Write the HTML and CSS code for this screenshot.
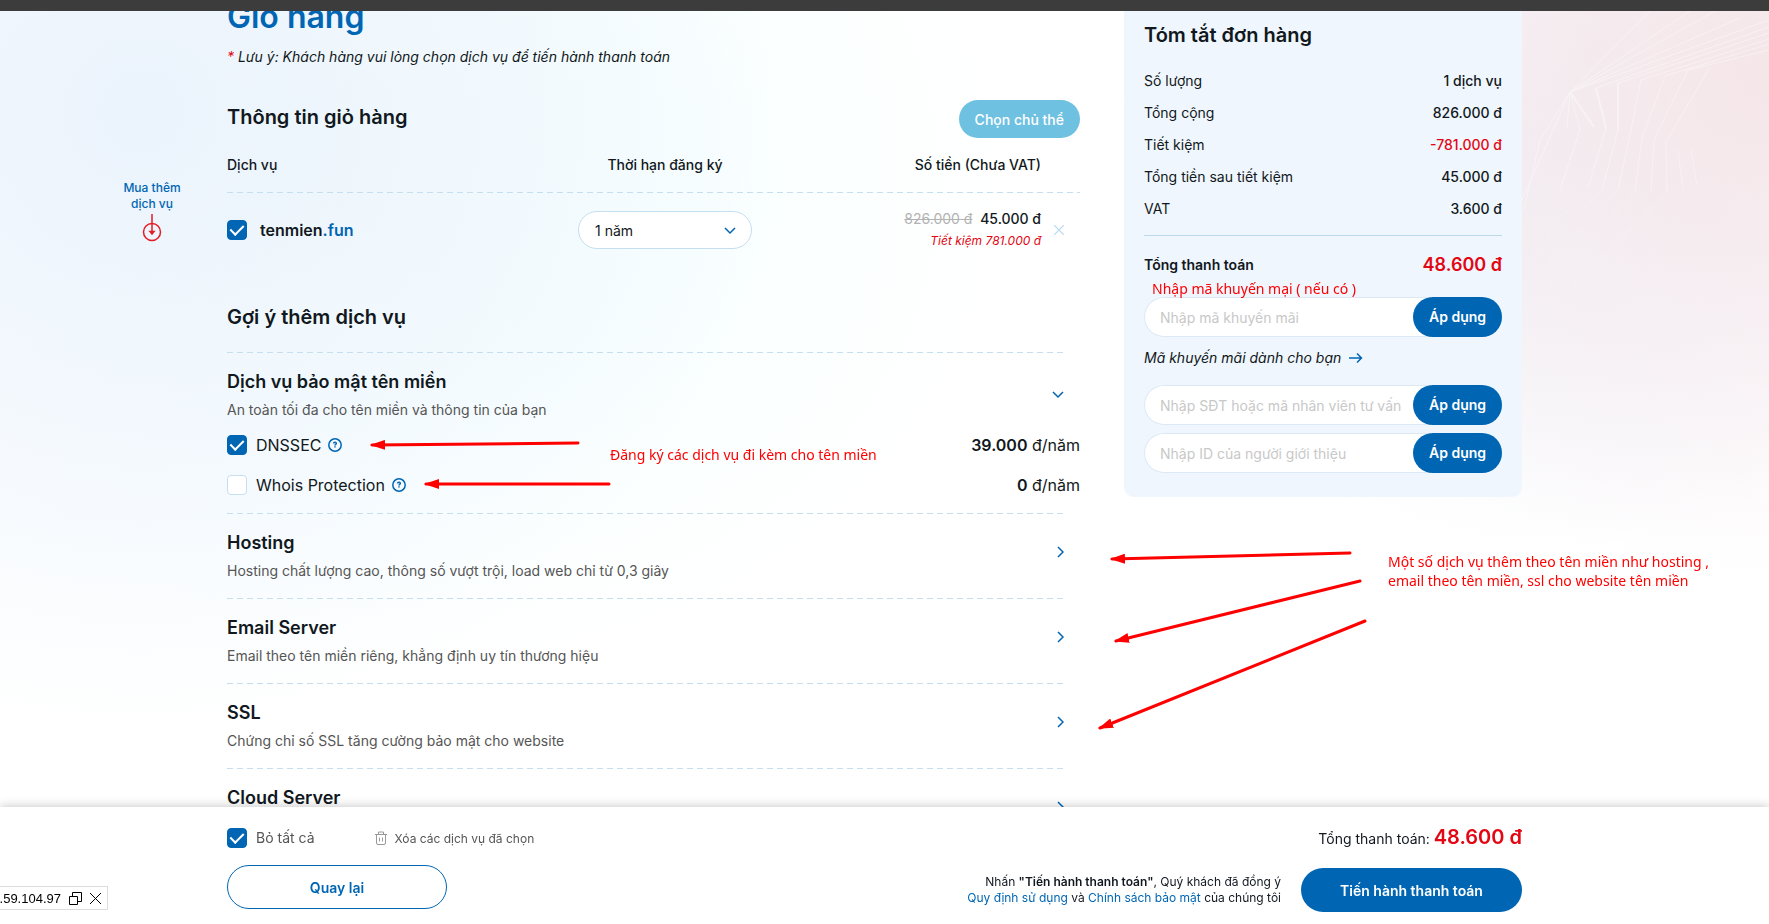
FILE: index.html
```html
<!DOCTYPE html>
<html lang="vi">
<head>
    <meta charset="UTF-8">
    <meta name="viewport" content="width=device-width, initial-scale=1.0">
    <title>Giỏ hàng</title>
    <link rel="stylesheet" href="styles.css">
</head>
<body>
    <div class="topbar"></div>

    <svg class="bg-lines" width="269" height="300" viewBox="0 0 269 300" fill="none" stroke="#fff">
        <path d="M70 92 190 11M70 92 215 11M70 92 240 18M70 92 269 20M96 88 269 27M118 83 269 33M141 80 269 39M165 76 269 44M188 70 269 50M70 92 150 11"/>
        <path stroke-width="2" d="M70 92 94 127M96 88 106 128M118 83 118 130"/>
        <path d="M70 92 67 128M70 92 80 130 60 190M70 92 22 200M70 92 40 140 24 210M141 80 130 135 118 190M165 76 142 138 135 192M188 70 154 140 151 192M210 67 166 142 167 192M106 128 88 188M118 130 102 190M178 150 183 190M191 150 197 185"/>
        <path opacity=".5" d="M102 190 24 265M118 190 30 285M135 192 48 289M167 192 70 289M80 200 22 250"/>
    </svg>

    <a class="buy-more" href="#">
        Mua thêm<br>dịch vụ
        <svg width="20" height="28" viewBox="0 0 20 28" fill="none" stroke="#e31b23" stroke-width="1.5">
            <circle cx="10" cy="18" r="8.500"/>
            <path d="M10 0v19"/>
            <path d="M8 17.500h4L10 20z"/>
        </svg>
    </a>

    <main class="container">
        <section class="cart">
            <h1>Giỏ hàng</h1>
            <p class="note"><span class="red">*</span> Lưu ý: Khách hàng vui lòng chọn dịch vụ để tiến hành thanh toán</p>

            <div class="cart-head">
                <h2>Thông tin giỏ hàng</h2>
                <button type="button" class="btn-owner">Chọn chủ thể</button>
            </div>

            <table class="cart-table">
                <thead>
                    <tr>
                        <th class="col-name">Dịch vụ</th>
                        <th class="col-term">Thời hạn đăng ký</th>
                        <th class="col-price">Số tiền (Chưa VAT)</th>
                        <th class="col-remove"></th>
                    </tr>
                </thead>
                <tbody>
                    <tr>
                        <td>
                            <label class="domain"><input type="checkbox" class="check" checked><span>tenmien<span class="blue">.fun</span></span></label>
                        </td>
                        <td>
                            <div class="term">
                                <select aria-label="Thời hạn đăng ký"><option>1 năm</option><option>2 năm</option></select>
                                <svg width="12" height="8" viewBox="0 0 12 8" fill="none" stroke="#0066b3" stroke-width="1.500"><path d="M1 1l5 5 5-5"/></svg>
                            </div>
                        </td>
                        <td class="price">
                            <p><del>826.000 đ</del> <span>45.000 đ</span></p>
                            <p class="saving">Tiết kiệm 781.000 đ</p>
                        </td>
                        <td>
                            <button type="button" class="btn-remove" aria-label="Xóa">
                                <svg width="10" height="10" viewBox="0 0 10 10" stroke="#b8d8ee" stroke-width="1.2"><path d="M0 0l10 10M10 0L0 10"/></svg>
                            </button>
                        </td>
                    </tr>
                </tbody>
            </table>

            <h2 class="suggest">Gợi ý thêm dịch vụ</h2>

            <div class="services">
                <div class="service">
                    <button type="button" class="service-head">
                        <span><strong>Dịch vụ bảo mật tên miền</strong><small>An toàn tối đa cho tên miền và thông tin của bạn</small></span>
                        <svg width="12" height="8" viewBox="0 0 12 8" fill="none" stroke="#0066b3" stroke-width="1.500"><path d="M1 1l5 5 5-5"/></svg>
                    </button>
                    <div class="options">
                        <div class="option">
                            <label><input type="checkbox" class="check" checked>DNSSEC</label>
                            <svg width="14" height="14" viewBox="0 0 14 14" fill="none" stroke="#0066b3" stroke-width="1.5"><circle cx="7" cy="7" r="6.200"/><path d="M5.500 5.500C5.700 3.600 8.500 3.800 8.300 5.500 8.200 6.400 7 6.300 7 7.600M7 8.200v1.200"/></svg>
                            <span class="cost"><b>39.000</b> đ/năm</span>
                        </div>
                        <div class="option">
                            <label><input type="checkbox" class="check">Whois Protection</label>
                            <svg width="14" height="14" viewBox="0 0 14 14" fill="none" stroke="#0066b3" stroke-width="1.5"><circle cx="7" cy="7" r="6.200"/><path d="M5.500 5.500C5.700 3.600 8.500 3.800 8.300 5.500 8.200 6.400 7 6.300 7 7.600M7 8.200v1.200"/></svg>
                            <span class="cost"><b>0</b> đ/năm</span>
                        </div>
                    </div>
                </div>
                <div class="service closed">
                    <button type="button" class="service-head">
                        <span><strong>Hosting</strong><small>Hosting chất lượng cao, thông số vượt trội, load web chỉ từ 0,3 giây</small></span>
                        <svg width="8" height="12" viewBox="0 0 8 12" fill="none" stroke="#0066b3" stroke-width="1.500"><path d="M2 1l5 5-5 5"/></svg>
                    </button>
                </div>
                <div class="service closed">
                    <button type="button" class="service-head">
                        <span><strong>Email Server</strong><small>Email theo tên miền riêng, khẳng định uy tín thương hiệu</small></span>
                        <svg width="8" height="12" viewBox="0 0 8 12" fill="none" stroke="#0066b3" stroke-width="1.500"><path d="M2 1l5 5-5 5"/></svg>
                    </button>
                </div>
                <div class="service closed">
                    <button type="button" class="service-head">
                        <span><strong>SSL</strong><small>Chứng chỉ số SSL tăng cường bảo mật cho website</small></span>
                        <svg width="8" height="12" viewBox="0 0 8 12" fill="none" stroke="#0066b3" stroke-width="1.500"><path d="M2 1l5 5-5 5"/></svg>
                    </button>
                </div>
                <div class="service closed">
                    <button type="button" class="service-head">
                        <span><strong>Cloud Server</strong></span>
                        <svg width="8" height="12" viewBox="0 0 8 12" fill="none" stroke="#0066b3" stroke-width="1.500"><path d="M2 1l5 5-5 5"/></svg>
                    </button>
                </div>
            </div>
        </section>

        <aside class="summary">
            <h2>Tóm tắt đơn hàng</h2>
            <dl>
                <div><dt>Số lượng</dt><dd>1 dịch vụ</dd></div>
                <div><dt>Tổng cộng</dt><dd>826.000 đ</dd></div>
                <div><dt>Tiết kiệm</dt><dd class="red">-781.000 đ</dd></div>
                <div><dt>Tổng tiền sau tiết kiệm</dt><dd>45.000 đ</dd></div>
                <div><dt>VAT</dt><dd>3.600 đ</dd></div>
            </dl>
            <p class="total"><span>Tổng thanh toán</span><strong>48.600 đ</strong></p>
            <form class="code">
                <input type="text" placeholder="Nhập mã khuyến mãi" aria-label="Nhập mã khuyến mãi">
                <button type="button">Áp dụng</button>
            </form>
            <a class="promo" href="#">Mã khuyến mãi dành cho bạn
                <svg width="14" height="12" viewBox="0 0 14 12" fill="none" stroke="#0066b3" stroke-width="1.500"><path d="M0 6h12M8 1.500L12.500 6 8 10.500"/></svg>
            </a>
            <form class="code">
                <input type="text" placeholder="Nhập SĐT hoặc mã nhân viên tư vấn" aria-label="Nhập SĐT hoặc mã nhân viên tư vấn">
                <button type="button">Áp dụng</button>
            </form>
            <form class="code">
                <input type="text" placeholder="Nhập ID của người giới thiệu" aria-label="Nhập ID của người giới thiệu">
                <button type="button">Áp dụng</button>
            </form>
        </aside>
    </main>

    <footer class="checkout">
        <div class="checkout-inner">
            <div class="checkout-left">
                <div class="select-row">
                    <label><input type="checkbox" class="check" checked>Bỏ tất cả</label>
                    <button type="button" class="btn-clear">
                        <svg width="12" height="14" viewBox="0 0 12 14" fill="none" stroke="#999"><path d="M0 3.500h12M3.500 3V1h5v2M1.500 4v8q0 1.500 1.500 1.500h6q1.500 0 1.500-1.500V4M4.500 6.500v4M7.500 6.500v4"/></svg>
                        Xóa các dịch vụ đã chọn
                    </button>
                </div>
                <button type="button" class="btn-back">Quay lại</button>
            </div>
            <div class="checkout-right">
                <p class="pay-total">Tổng thanh toán: <strong>48.600 đ</strong></p>
                <div class="pay-row">
                    <p>Nhấn <b>"Tiến hành thanh toán"</b>, Quý khách đã đồng ý<br><a href="#">Quy định sử dụng</a> và <a href="#">Chính sách bảo mật</a> của chúng tôi</p>
                    <button type="button" class="btn-pay">Tiến hành thanh toán</button>
                </div>
            </div>
        </div>
    </footer>

    <div class="ip-box">
        <span>.59.104.97</span>
        <svg width="13" height="13" viewBox="0 0 13 13" fill="none" stroke="#000"><path d="M.5 4.500h8v8h-8zM3.500 4.500v-4h9v9h-4"/></svg>
        <svg width="11" height="11" viewBox="0 0 11 11" stroke="#000"><path d="M0 0l11 11M11 0L0 11"/></svg>
    </div>

    <!-- hướng dẫn -->
    <svg class="arrows" width="1769" height="924" viewBox="0 0 1769 924" stroke="#f00" stroke-width="3" stroke-linecap="round">
        <defs>
            <marker id="head" markerUnits="userSpaceOnUse" markerWidth="15" markerHeight="10" refX="13" refY="5" orient="auto">
                <path d="M0 0L15 5 0 10z" fill="#f00" stroke="none"/>
            </marker>
        </defs>
        <g marker-end="url(#head)">
            <path d="M578 443L372 445"/>
            <path d="M609 484L426 484"/>
            <path d="M1350 553L1112 559"/>
            <path d="M1360 581L1116 641"/>
            <path d="M1365 621L1100 728"/>
        </g>
    </svg>
    <p class="hint hint-promo">Nhập mã khuyến mại ( nếu có )</p>
    <p class="hint hint-domain">Đăng ký các dịch vụ đi kèm cho tên miền</p>
    <p class="hint hint-more">Một số dịch vụ thêm theo tên miền như hosting ,<br>email theo tên miền, ssl cho website tên miền</p>
</body>
</html>
```
FILE: styles.css
```css
* {
    box-sizing: border-box;
}
body {
    position: relative;
    margin: 0;
    min-height: 100vh;
    overflow: hidden;
    font-family: Inter, Arial, sans-serif;
    font-size: 14px;
    line-height: 20px;
    color: #111820;
    background:
        radial-gradient(ellipse 560px 500px at 100% 8%, #f5e6e8 0%, #f7eaee99 50%, #fdf4f600 100%),
        radial-gradient(ellipse 440px 400px at 88% 16%, #ebeef6 0%, #ebeef600 100%),
        radial-gradient(ellipse 640px 620px at 8% 12%, #ebf3fc 0%, #eff6fdaa 55%, #f4faff00 100%),
        radial-gradient(ellipse 560px 480px at 25% 20%, #f2feff 0%, #f4feff00 100%),
        #fff;
}
h1, h2, p, dl, dd {
    margin: 0;
}
h1 {
    color: #0066b3;
    font-size: 32px;
    line-height: 34px;
    font-weight: 600;
}
h2 {
    font-size: 20px;
    line-height: 28px;
    font-weight: 600;
}
a {
    color: #0066b3;
    text-decoration: none;
}
button, input, select {
    font-family: inherit;
    font-size: 14px;
    color: inherit;
}
button {
    border: 0;
    padding: 0;
    background: none;
    cursor: pointer;
}
.red {
    color: #e30613;
}
.blue {
    color: #0066b3;
}
.topbar {
    position: fixed;
    top: 0;
    left: 0;
    width: 100%;
    height: 11px;
    background: #3c3c3c;
    z-index: 10;
}
.bg-lines {
    position: absolute;
    top: 0;
    right: 0;
    opacity: 0.4;
}
.buy-more {
    position: absolute;
    top: 180px;
    left: 112px;
    width: 80px;
    font-size: 12px;
    line-height: 16px;
    font-weight: 500;
    text-align: center;
}
.buy-more svg {
    display: block;
    margin: 2px auto 0;
}
.container {
    display: grid;
    grid-template-columns: 1fr 398px;
    gap: 44px;
    align-items: start;
    max-width: 1295px;
    margin: 0 auto;
    position: relative;
    right: 10px;
}

/* cart */
.note {
    margin-top: 13px;
    font-style: italic;
}
.cart-head {
    display: flex;
    justify-content: space-between;
    align-items: flex-start;
    margin-top: 33px;
}
.cart-head h2 {
    line-height: 34px;
}
.btn-owner {
    height: 38px;
    padding: 0 16px;
    border-radius: 19px;
    background: #6fc1e1;
    color: #fff;
    font-weight: 500;
}
.cart-table {
    width: 100%;
    border-collapse: collapse;
    table-layout: fixed;
}
.cart-table th, .cart-table td {
    padding: 0;
}
.cart-table th {
    height: 55px;
    padding-bottom: 2px;
    font-weight: 500;
    text-align: center;
}
.cart-table td {
    height: 74px;
}
.cart-table thead, .service {
    background: repeating-linear-gradient(90deg, #c5dff0 0 6px, transparent 6px 10px) bottom / 100% 1px no-repeat;
}
.cart-table .col-name {
    text-align: left;
}
.cart-table .col-term {
    width: 174px;
}
.cart-table .col-price {
    width: 289px;
    text-align: right;
}
.cart-table .col-remove {
    width: 39px;
}
.check {
    appearance: none;
    display: grid;
    place-items: center;
    flex: none;
    width: 20px;
    height: 20px;
    margin: 0;
    border: 1px solid #c5dff0;
    border-radius: 4px;
    background: #fff;
}
.check:checked {
    border-color: #0066b3;
    background: #0066b3;
}
.check:checked::after {
    content: "";
    width: 6px;
    height: 11px;
    margin-bottom: 3px;
    border: solid #fff;
    border-width: 0 2px 2px 0;
    transform: rotate(45deg);
}
.domain {
    display: flex;
    align-items: center;
    gap: 13px;
    font-size: 16px;
    font-weight: 600;
}
.term {
    position: relative;
}
.term select {
    appearance: none;
    display: block;
    width: 100%;
    height: 38px;
    padding: 0 16px;
    border: 1px solid #c5dff0;
    border-radius: 19px;
    background: #fff;
}
.term svg {
    position: absolute;
    top: 16px;
    right: 16px;
}
.price {
    text-align: right;
    font-weight: 500;
}
.price del {
    margin-right: 4px;
    color: #b3b3b3;
    font-weight: 400;
}
.price .saving {
    margin-top: 2px;
    color: #e30613;
    font-size: 12px;
    font-style: italic;
    font-weight: 400;
}
.btn-remove {
    display: block;
    margin-left: 13px;
}
.btn-remove svg {
    display: block;
}
.suggest {
    margin-top: 36px;
}
.services {
    margin: 21px 16px 0 0;
    padding-top: 1px;
    background: repeating-linear-gradient(90deg, #c5dff0 0 6px, transparent 6px 10px) top / 100% 1px no-repeat;
}
.service {
    padding: 16px 0 9px;
}
.service.closed {
    padding-bottom: 18px;
}
.service-head {
    display: flex;
    justify-content: space-between;
    align-items: center;
    width: 100%;
    text-align: left;
}
.service-head span {
    min-height: 51px;
}
.service-head strong, .service-head small {
    display: block;
}
.service-head strong {
    font-size: 18px;
    line-height: 26px;
    font-weight: 600;
}
.service-head small {
    margin-top: 5px;
    font-size: 14px;
    line-height: 20px;
    color: #555;
}
.service.closed .service-head svg {
    margin-bottom: 8px;
}
.options {
    margin: 5px -16px 0 0;
}
.option {
    display: flex;
    align-items: center;
    gap: 7px;
    height: 40px;
    font-size: 16px;
}
.option label, .select-row label {
    display: flex;
    align-items: center;
    gap: 9px;
}
.option b {
    font-weight: 600;
}
.cost {
    margin-left: auto;
}

/* order summary */
.summary {
    padding: 21px 20px 24px;
    border-radius: 10px;
    background: #eff6fd;
}
.summary dl {
    margin-top: 16px;
    padding-bottom: 10px;
    border-bottom: 1px solid #bcd9ec;
}
.summary dl div {
    display: flex;
    justify-content: space-between;
    line-height: 32px;
}
.summary dd {
    font-weight: 500;
}
.total {
    display: flex;
    justify-content: space-between;
    align-items: center;
    margin: 15px 0 18px;
    line-height: 28px;
    font-weight: 600;
}
.total strong {
    color: #e30613;
    font-size: 18px;
    font-weight: 600;
}
.code {
    display: flex;
    height: 40px;
    margin-bottom: 8px;
    border-radius: 20px;
    background: #fff;
    box-shadow: inset 0 0 0 1px #dce9f5;
}
.code:last-child {
    margin-bottom: 0;
}
.code input {
    flex: 1;
    min-width: 0;
    padding: 1px 0 0 16px;
    border: 0;
    background: none;
}
.code input::placeholder {
    color: #c8c8c8;
}
.code button {
    width: 89px;
    padding-bottom: 1px;
    border-radius: 20px;
    background: #0066b3;
    color: #fff;
    font-weight: 600;
}
.promo {
    display: flex;
    align-items: center;
    gap: 8px;
    margin: 11px 0 17px;
    color: #111820;
    font-style: italic;
}

/* bottom bar */
.checkout {
    position: fixed;
    left: 0;
    bottom: 0;
    width: 100%;
    padding: 16px 0 12px;
    background: #fff;
    box-shadow: 0 0 10px rgba(0, 0, 0, 0.25);
}
.checkout-inner {
    position: relative;
    right: 10px;
    display: flex;
    justify-content: space-between;
    max-width: 1295px;
    margin: 0 auto;
}
.select-row {
    display: flex;
    align-items: center;
    gap: 60px;
    height: 30px;
    color: #555;
}
.btn-clear {
    display: flex;
    align-items: center;
    gap: 8px;
    font-size: 12px;
}
.btn-back {
    width: 220px;
    height: 44px;
    margin-top: 12px;
    border: 1px solid #0066b3;
    border-radius: 22px;
    color: #0066b3;
    font-weight: 600;
}
.pay-total {
    line-height: 28px;
    text-align: right;
}
.pay-total strong {
    color: #e30613;
    font-size: 20px;
    font-weight: 600;
}
.pay-row {
    display: flex;
    align-items: center;
    gap: 20px;
    margin-top: 15px;
    font-size: 12px;
    line-height: 16px;
    text-align: right;
}
.pay-row b {
    font-weight: 600;
}
.btn-pay {
    width: 221px;
    height: 44px;
    border-radius: 22px;
    background: #0066b3;
    color: #fff;
    font-weight: 600;
}
.ip-box {
    position: fixed;
    left: 0;
    bottom: 14px;
    display: flex;
    align-items: center;
    justify-content: flex-end;
    gap: 8px;
    width: 108px;
    height: 24px;
    padding-right: 6px;
    border: 1px solid #ddd;
    border-left: 0;
    background: #fff;
    color: #000;
    font: 13px "Liberation Sans", Arial, sans-serif;
    white-space: nowrap;
}
.ip-box svg {
    flex: none;
}

/* hints drawn over the page */
.arrows {
    position: absolute;
    top: 0;
    left: 0;
    pointer-events: none;
}
.hint {
    position: absolute;
    color: #f00;
    font-family: "Noto Sans", sans-serif;
    font-size: 14px;
    line-height: 19px;
    white-space: nowrap;
}
.hint-promo {
    top: 279px;
    left: 1152px;
}
.hint-domain {
    top: 445px;
    left: 610px;
}
.hint-more {
    top: 552px;
    left: 1388px;
}
```
